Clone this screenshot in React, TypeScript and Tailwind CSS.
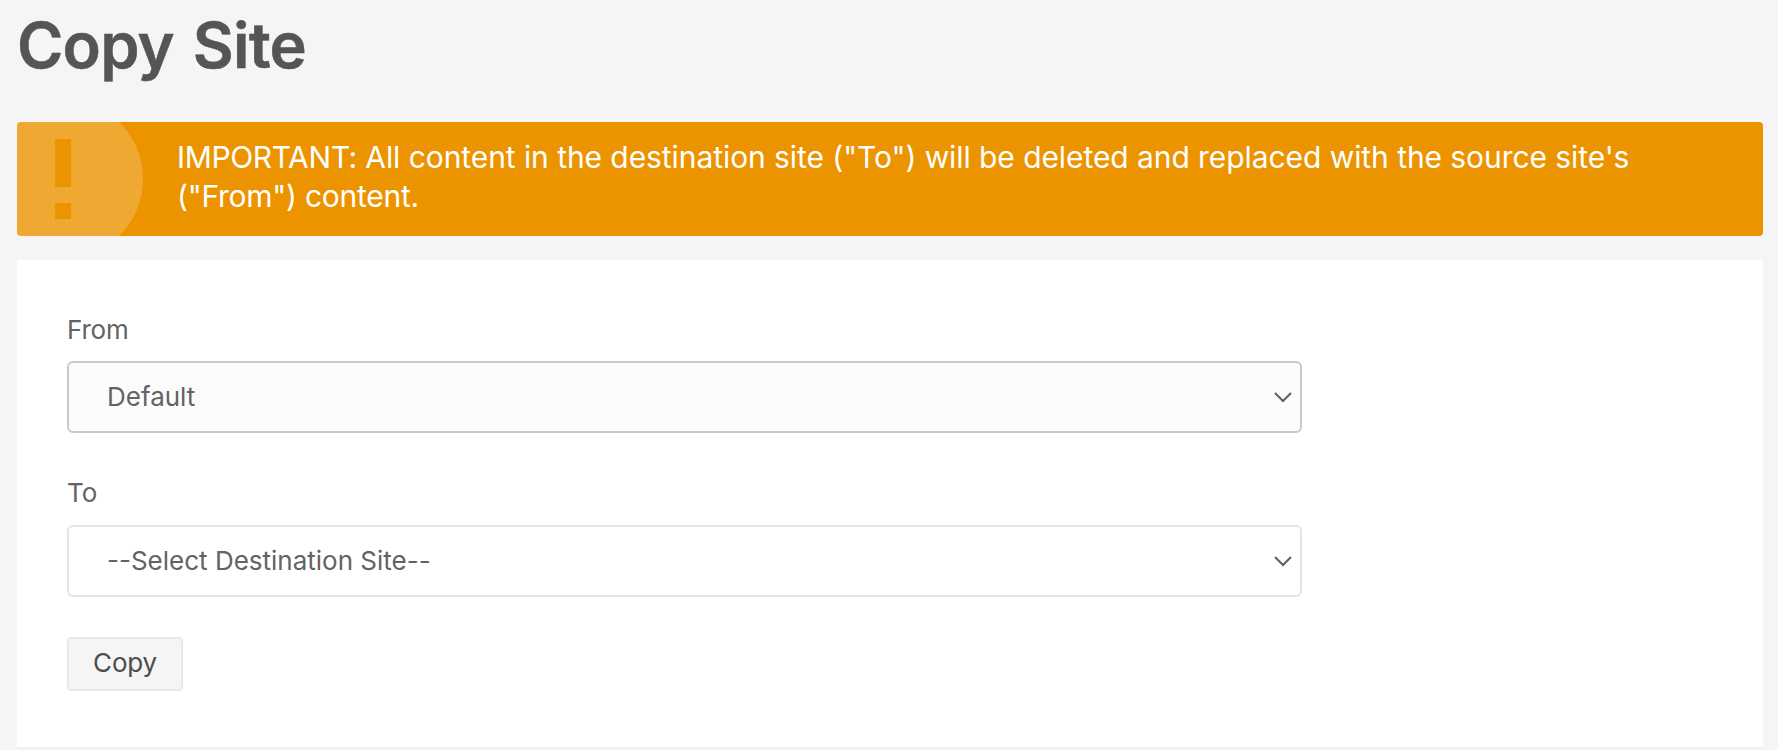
function Chevron() {
  return (
    <svg
      className="mr-[7px] h-[20px] w-[20px] shrink-0"
      viewBox="0 0 20 20"
      fill="none"
      stroke="#606060"
      strokeWidth="2"
    >
      <path d="M2 6 L10 14 L18 6" />
    </svg>
  );
}

function SelectBox({ value, active }: { value: string; active?: boolean }) {
  return (
    <div
      role="combobox"
      aria-expanded="false"
      className={
        active
          ? "flex h-[72px] w-[1235px] items-center justify-between rounded-[6px] border-2 border-[#c9c9c9] bg-[#fcfcfc] pl-[38px]"
          : "flex h-[72px] w-[1235px] items-center justify-between rounded-[6px] border-2 border-[#e5e5e5] bg-white pl-[38px]"
      }
    >
      <span className="pb-[2px]">{value}</span>
      <Chevron />
    </div>
  );
}

export default function App() {
  return (
    <div className="h-[750px] overflow-hidden bg-[#f5f5f5] pl-[17px] pr-[15px] pt-[5px] font-['Inter',sans-serif] text-[26px] text-[#636363]">
      <h1 className="h-[117px] text-[63px] leading-[80px] font-semibold tracking-[-0.8px] text-[#555555] [-webkit-text-stroke:0.5px_#555555] [word-spacing:4px]">
        Copy Site
      </h1>

      <div className="relative h-[114px] overflow-hidden rounded-[4px] bg-[#ec9400] pt-[16px] pr-[100px] pl-[160px] text-[30px] leading-[39px] tracking-[-0.07px] text-white">
        <svg
          className="absolute top-[-39px] left-[-50px] h-[192px] w-[192px]"
          viewBox="0 0 24 24"
          fill="#ffffff"
          fillOpacity="0.2"
        >
          <path d="M12 2C6.48 2 2 6.48 2 12s4.48 10 10 10 10-4.48 10-10S17.52 2 12 2zm1 15h-2v-2h2v2zm0-4h-2V7h2v6z" />
        </svg>
        <p>
          <span className="tracking-[-0.38px]">IMPORTANT:</span> All content in the destination site ("To") will be
          deleted and replaced with the source site's <span className="tracking-[-0.25px]">("From") content.</span>
        </p>
      </div>

      <div className="mt-[24px] h-[487px] bg-white pt-[50px] pl-[50px] shadow-[0_3px_0_#f1f1f1]">
        <div className="mb-[11px] h-[40px] leading-[39px] tracking-[-0.2px]">From</div>
        <SelectBox value="Default" active />
        <div className="mt-[41px] mb-[11px] h-[40px] leading-[37px]">To</div>
        <SelectBox value="--Select Destination Site--" />
        <button className="mt-[40px] block h-[54px] w-[116px] rounded-[4px] border-2 border-[#e8e8e8] bg-[#f5f5f5] pb-[3px] tracking-[-0.2px] text-[#4c4c4c]">
          Copy
        </button>
      </div>
    </div>
  );
}
